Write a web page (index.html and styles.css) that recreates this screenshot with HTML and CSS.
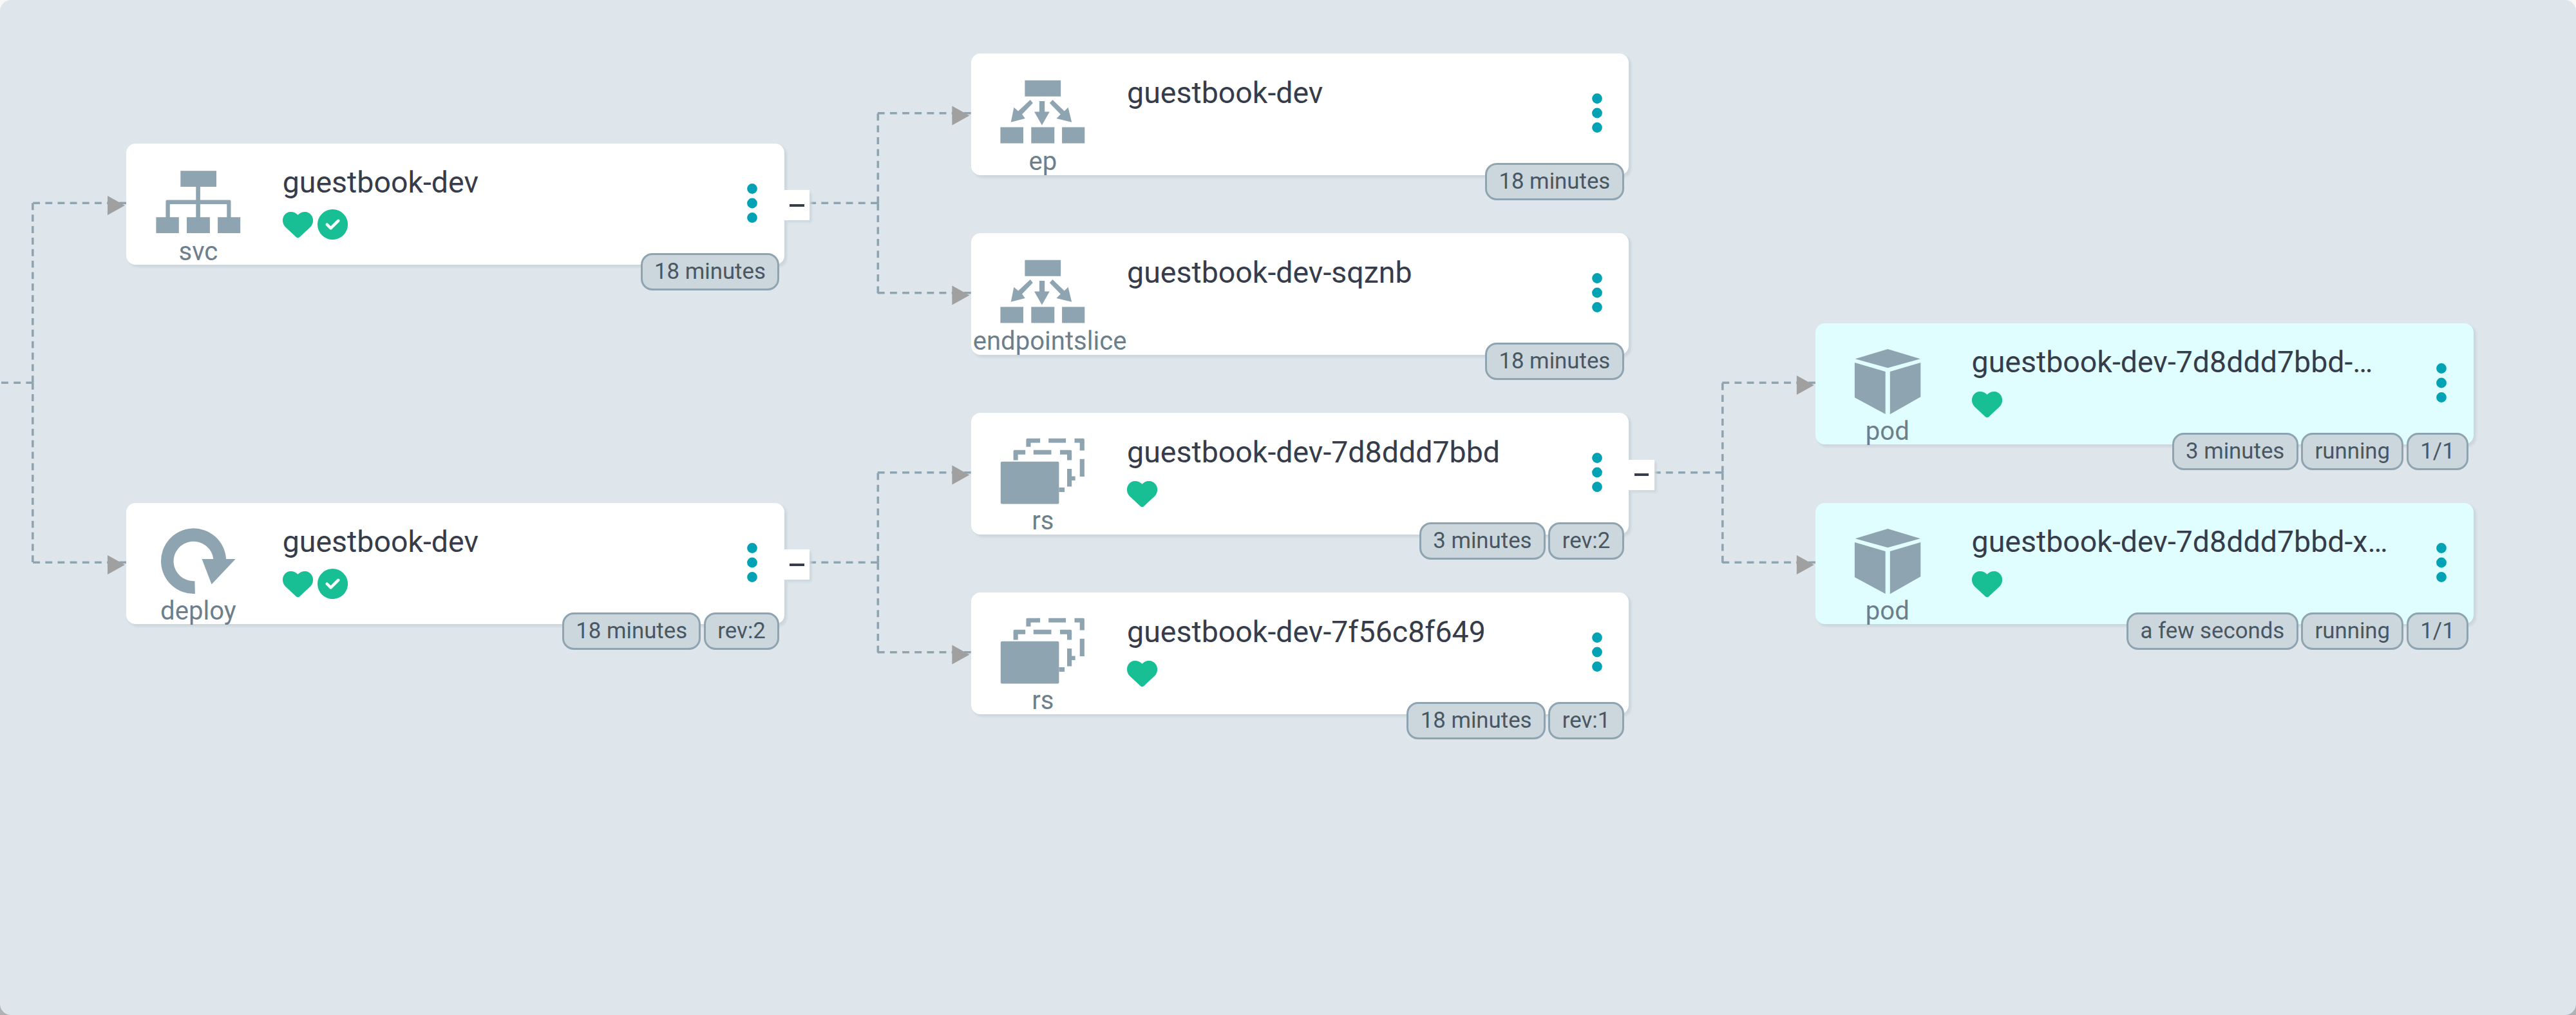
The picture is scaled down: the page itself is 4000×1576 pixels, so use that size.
FILE: index.html
```html
<!DOCTYPE html>
<html lang="en">
<head>
<meta charset="utf-8">
<title>Resource tree</title>
<link rel="stylesheet" href="styles.css">
</head>
<body>
<svg class="symbols" aria-hidden="true">
  <symbol id="i-heart" viewBox="0 0 512 512"><path d="M47.6 300.4L228.3 469.1c7.5 7 17.4 10.9 27.7 10.9s20.2-3.9 27.7-10.9L464.4 300.4c30.4-28.3 47.6-68 47.6-109.5v-5.8c0-69.9-50.5-129.5-119.4-141C347 36.5 300.6 51.4 268 84L256 96 244 84c-32.6-32.6-79-47.5-124.6-39.9C50.5 55.6 0 115.2 0 185.1v5.8c0 41.5 17.2 81.2 47.6 109.5z"/></symbol>
  <symbol id="i-check" viewBox="0 0 512 512"><path d="M256 512A256 256 0 1 0 256 0a256 256 0 1 0 0 512zM369 209L241 337c-9.4 9.4-24.6 9.4-33.9 0l-64-64c-9.4-9.4-9.4-24.6 0-33.9s24.6-9.4 33.9 0l47 47L335 175c9.4-9.4 24.6-9.4 33.9 0s9.4 24.6 0 33.9z"/></symbol>
  <symbol id="i-svc" viewBox="0 0 132 108">
    <path d="M38.3 6.2H94v24.7H38.3zM.4 78.2h35.4v24.9H.4zM48 78.2h35.9v24.9H48zM96.1 78.2h35.1v24.9H96.1z"/>
    <path d="M62.3 30h6.6v50h-6.6zM15.4 80V53.5q0-2 2-2h97.1q2 0 2 2V80h-6.2V58H21.8v22z"/>
  </symbol>
  <symbol id="i-deploy" viewBox="0 0 132 108">
    <path d="M60.9 104.9A50.6 50.8 0 1 1 109.1 50.9H123.7L86.6 90.2L71.5 50.9H89.3A31 30.8 0 1 0 60.4 85.2z"/>
  </symbol>
  <symbol id="i-ep" viewBox="0 0 132 108">
    <path d="M38.4 5.7h55.8v25H38.4zM.4 78.4H36v25H.4zM48.3 78.4h36v25h-36zM96.1 78.4h35.2v25H96.1z"/>
    <path d="M60.9 38h8.3v16.4h7.6L64.9 75.4L53 54.4h7.9z"/>
    <path d="M46.7 36L50.9 41L34.1 58.4L38.8 65L16.7 70.7L21.4 47.7L28.1 53.4z"/>
    <path d="M81.5 36L76.8 41L93.8 58.4L87.4 65L111.2 70.7L105.6 47.7L99.7 53.4z"/>
  </symbol>
  <symbol id="i-rs" viewBox="0 0 132 108">
    <rect x=".8" y="39.7" width="90.6" height="65.7" rx="2"/>
    <path d="M20.6 37.4V23.7q0-2 2-2h16.6v7H27.7v8.7zM51.8 21.7h27.7v7H51.8zM93 21.7h16.2q2 0 2 2v13.7H104v-8.7H93zM104 51h7.2v11.4h5.5V69h-5.5v9.4H104zM91.4 80h8.7v7h-8.7z"/>
    <path d="M40.4 16.7v-11q0-2 2-2h19.7v6.7H47.5v6.3zM75.2 3.7h26.9v6.7H75.2zM115.5 3.7h13.4q2 0 2 2v16.7h-7.2v-12h-8.2zM123.7 35.7h7.2V63h-7.2z"/>
  </symbol>
  <symbol id="i-pod" viewBox="0 0 132 108">
    <path d="M66.3 3.9L116.9 19.2L66.3 33.2L15.7 19.2zM14.9 24.9L62.7 38.9V104.9L14.9 79.2zM117.3 24.9L69.8 38.9V105.2L117.3 78.2z"/>
  </symbol>
  <symbol id="i-dots" viewBox="0 0 16 61"><circle cx="8" cy="8" r="7.9"/><circle cx="8" cy="30.5" r="7.9"/><circle cx="8" cy="53" r="7.9"/></symbol>
</svg>

<main class="tree">
  <svg class="edges" viewBox="0 0 4000 1576" aria-hidden="true">
    <g class="line-h">
      <path d="M-93.7 594.2H51.2"/>
      <path d="M51.2 315.2H196.1"/><path d="M51.2 873.2H196.1"/>
      <path d="M1217.9 315.2H1362.8"/><path d="M1362.8 175.7H1507.7"/><path d="M1362.8 454.7H1507.7"/>
      <path d="M1217.9 873.2H1362.8"/><path d="M1362.8 733.7H1507.7"/><path d="M1362.8 1012.7H1507.7"/>
      <path d="M2529.4 733.7H2674.3"/><path d="M2674.3 594.2H2819.2"/><path d="M2674.3 873.2H2819.2"/>
    </g>
    <g class="line-v">
      <path d="M1363.3 315.8V176.3"/><path d="M1363.3 315.8V455.3"/>
      <path d="M1363.3 873.8V734.3"/><path d="M1363.3 873.8V1013.3"/>
      <path d="M2674.8 734.3V594.8"/><path d="M2674.8 734.3V873.8"/>
    </g>
    <g class="line-v-long">
      <path d="M50.8 594.2V315.2"/><path d="M50.8 594.2V873.2"/>
    </g>
    <g class="arrows">
      <path d="M167 304v30l27-15z"/><path d="M167 862v30l27-15z"/>
      <path d="M1478.4 164.4v30l27-15z"/><path d="M1478.4 443.4v30l27-15z"/>
      <path d="M1478.4 722.4v30l27-15z"/><path d="M1478.4 1001.4v30l27-15z"/>
      <path d="M2789.9 583v30l27-15z"/><path d="M2789.9 862v30l27-15z"/>
    </g>
  </svg>

  <article class="node at-svc">
    <div class="kind"><svg class="kind-icon"><use href="#i-svc"/></svg><span class="kind-name">svc</span></div>
    <div class="info"><h2 class="title">guestbook-dev</h2><div class="status"><svg><use href="#i-heart"/></svg><svg><use href="#i-check"/></svg></div></div>
    <svg class="menu"><use href="#i-dots"/></svg>
    <div class="toggle"></div>
    <div class="tags"><span class="tag">18 minutes</span></div>
  </article>

  <article class="node at-deploy">
    <div class="kind"><svg class="kind-icon"><use href="#i-deploy"/></svg><span class="kind-name">deploy</span></div>
    <div class="info"><h2 class="title">guestbook-dev</h2><div class="status"><svg><use href="#i-heart"/></svg><svg><use href="#i-check"/></svg></div></div>
    <svg class="menu"><use href="#i-dots"/></svg>
    <div class="toggle"></div>
    <div class="tags"><span class="tag">18 minutes</span><span class="tag">rev:2</span></div>
  </article>

  <article class="node at-ep">
    <div class="kind"><svg class="kind-icon"><use href="#i-ep"/></svg><span class="kind-name">ep</span></div>
    <div class="info"><h2 class="title">guestbook-dev</h2></div>
    <svg class="menu"><use href="#i-dots"/></svg>
    <div class="tags"><span class="tag">18 minutes</span></div>
  </article>

  <article class="node at-slice">
    <div class="kind"><svg class="kind-icon"><use href="#i-ep"/></svg><span class="kind-name kind-name-long">endpointslice</span></div>
    <div class="info"><h2 class="title">guestbook-dev-sqznb</h2></div>
    <svg class="menu"><use href="#i-dots"/></svg>
    <div class="tags"><span class="tag">18 minutes</span></div>
  </article>

  <article class="node at-rs-new">
    <div class="kind"><svg class="kind-icon"><use href="#i-rs"/></svg><span class="kind-name">rs</span></div>
    <div class="info"><h2 class="title">guestbook-dev-7d8ddd7bbd</h2><div class="status"><svg><use href="#i-heart"/></svg></div></div>
    <svg class="menu"><use href="#i-dots"/></svg>
    <div class="toggle"></div>
    <div class="tags"><span class="tag">3 minutes</span><span class="tag">rev:2</span></div>
  </article>

  <article class="node at-rs-old">
    <div class="kind"><svg class="kind-icon"><use href="#i-rs"/></svg><span class="kind-name">rs</span></div>
    <div class="info"><h2 class="title">guestbook-dev-7f56c8f649</h2><div class="status"><svg><use href="#i-heart"/></svg></div></div>
    <svg class="menu"><use href="#i-dots"/></svg>
    <div class="tags"><span class="tag">18 minutes</span><span class="tag">rev:1</span></div>
  </article>

  <article class="node pod at-pod-1">
    <div class="kind"><svg class="kind-icon"><use href="#i-pod"/></svg><span class="kind-name">pod</span></div>
    <div class="info"><h2 class="title">guestbook-dev-7d8ddd7bbd-…</h2><div class="status"><svg><use href="#i-heart"/></svg></div></div>
    <svg class="menu"><use href="#i-dots"/></svg>
    <div class="tags"><span class="tag">3 minutes</span><span class="tag">running</span><span class="tag">1/1</span></div>
  </article>

  <article class="node pod at-pod-2">
    <div class="kind"><svg class="kind-icon"><use href="#i-pod"/></svg><span class="kind-name">pod</span></div>
    <div class="info"><h2 class="title">guestbook-dev-7d8ddd7bbd-x…</h2><div class="status"><svg><use href="#i-heart"/></svg></div></div>
    <svg class="menu"><use href="#i-dots"/></svg>
    <div class="tags"><span class="tag">a few seconds</span><span class="tag">running</span><span class="tag">1/1</span></div>
  </article>
</main>
</body>
</html>
```
FILE: styles.css
```css
* { box-sizing: border-box; }

body {
  margin: 0;
  background: linear-gradient(#f8f8f8 50%, #b0b1b2 50%);
  font-family: Roboto, "Liberation Sans", sans-serif;
}

.symbols { position: absolute; width: 0; height: 0; }

.tree {
  position: relative;
  width: 4000px;
  height: 1576px;
  overflow: hidden;
  border-radius: 17px;
  background: #dee6eb;
}

.edges { display: block; width: 4000px; height: 1576px; }
.edges g { fill: none; stroke: #8fa4b1; stroke-width: 3.6; }
.edges .line-h { stroke-dasharray: 10.87 8.28; }
.edges .line-v { stroke-dasharray: 10.87 7.5; }
.edges .line-v-long { stroke-dasharray: 10.87 7.0; }
.edges .arrows { fill: #a0a0a0; stroke: none; }

.node {
  position: absolute;
  display: flex;
  width: 1021.7px;
  height: 188.4px;
  border-radius: 14.5px;
  background: #fff;
  box-shadow: 3.6px 3.6px 3.6px #ccd6dd;
}
.pod { background: #e0feff; }

.at-svc { left: 196.1px; top: 222.8px; }
.at-deploy { left: 196.1px; top: 780.8px; }
.at-ep { left: 1507.5px; top: 83.3px; }
.at-slice { left: 1507.5px; top: 362.3px; }
.at-rs-new { left: 1507.5px; top: 641.3px; }
.at-rs-old { left: 1507.5px; top: 920.3px; }
.at-pod-1 { left: 2819px; top: 501.8px; }
.at-pod-2 { left: 2819px; top: 780.8px; }

.kind {
  display: flex;
  flex-direction: column;
  align-items: center;
  width: 223.6px;
  padding-top: 36px;
}
.kind-icon { flex: none; width: 132px; height: 108px; fill: #8fa4b1; }
.kind-name {
  color: #6d7f8b;
  font-size: 40.1px;
  line-height: 48px;
  white-space: nowrap;
}
/* names wider than the column start at the card edge and run over the title column */
.kind-name-long { align-self: flex-start; margin-left: 3.2px; }

.info { flex: 1; margin-left: 19px; padding-top: 32.4px; white-space: nowrap; }
.title { margin: 0; color: #363c4a; font-size: 46.5px; line-height: 56px; font-weight: 400; }
.status { display: flex; gap: 7.2px; margin-top: 13.8px; }
.status svg { width: 47.1px; height: 47.1px; fill: #18be94; }

.menu { width: 16px; height: 61px; margin: 62px 41.3px 0 0; fill: #00a2b3; }

.toggle {
  position: absolute;
  left: 100%;
  top: 72.4px;
  display: flex;
  align-items: center;
  justify-content: center;
  width: 39.5px;
  height: 47.2px;
  background: #fff;
  box-shadow: 3.6px 3.6px 3.6px #ccd6dd;
}
.toggle::before { content: ""; width: 22.5px; height: 4px; background: #363c4a; }

.tags {
  position: absolute;
  right: 7.6px;
  bottom: -39.6px;
  display: flex;
  gap: 4.6px;
}
.tag {
  height: 58px;
  padding: 0 18.3px;
  border: 3.6px solid #8fa4b1;
  border-radius: 18px;
  background: #ccd6dd;
  color: #495763;
  font-size: 34.8px;
  line-height: 51px;
  white-space: nowrap;
}
```
